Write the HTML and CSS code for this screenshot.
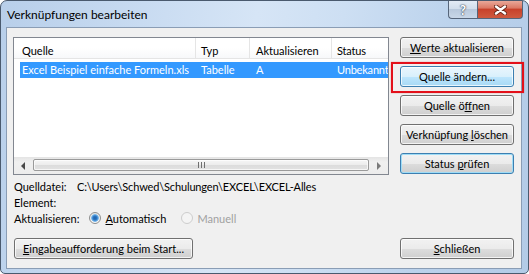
FILE: index.html
```html
<!DOCTYPE html>
<html lang="de">
<head>
  <meta charset="UTF-8" />
  <title>Verknüpfungen bearbeiten</title>
  <link rel="stylesheet" href="styles.css">
</head>
<body>
  <div class="fenster">
    <div class="titelleiste">
      <span class="titel">Verknüpfungen bearbeiten</span>
      <div class="titel-knoepfe">
        <span class="knopf-hilfe">?</span>
        <span class="knopf-schliessen">
          <svg width="13" height="10" viewBox="0 0 13 10">
            <path d="M2 1.5 L11 8.5 M11 1.5 L2 8.5" stroke="#6b2a1c" stroke-width="4.2" stroke-linecap="round" fill="none"/>
            <path d="M2 1.5 L11 8.5 M11 1.5 L2 8.5" stroke="#fff" stroke-width="2.4" stroke-linecap="round" fill="none"/>
          </svg>
        </span>
      </div>
    </div>

    <div class="inhalt">
      <div class="oben">
        <div class="links">
          <div class="liste">
            <div class="kopf">
              <span class="sp sp-quelle">Quelle</span>
              <span class="sp sp-typ">Typ</span>
              <span class="sp sp-akt">Aktualisieren</span>
              <span class="sp sp-status">Status</span>
            </div>
            <div class="zeilen">
              <div class="zeile aktiv">
                <span class="sp sp-quelle">Excel Beispiel einfache Formeln.xls</span>
                <span class="sp sp-typ">Tabelle</span>
                <span class="sp sp-akt">A</span>
                <span class="sp sp-status">Unbekannt</span>
              </div>
            </div>
            <div class="scrollleiste">
              <span class="pfeil"><span class="dreieck-links"></span></span>
              <span class="daumen">
                <svg width="7" height="6" viewBox="0 0 7 6">
                  <path d="M0.5 0 V6 M3.5 0 V6 M6.5 0 V6" stroke="#6f6f6f" stroke-width="1"/>
                </svg>
              </span>
              <span class="pfeil"><span class="dreieck-rechts"></span></span>
            </div>
          </div>

          <div class="info">
            <div class="info-zeile">
              <span class="info-label">Quelldatei:</span>
              <span class="pfad">C:\Users\Schwed\Schulungen\EXCEL\EXCEL-Alles</span>
            </div>
            <div class="info-zeile">
              <span class="info-label">Element:</span>
            </div>
            <div class="info-zeile">
              <span>Aktualisieren:</span>
              <label class="radio"><span class="kreis an"></span><span><u>A</u>utomatisch</span></label>
              <label class="radio aus"><span class="kreis"></span><span>Manuell</span></label>
            </div>
          </div>
        </div>

        <div class="knoepfe">
          <button class="knopf"><u>W</u>erte aktualisieren</button>
          <button class="knopf hover">Quelle ändern...</button>
          <button class="knopf">Quelle ö<u>f</u>fnen</button>
          <button class="knopf">Verknüpfung <u>l</u>öschen</button>
          <button class="knopf standard">Status <u>p</u>rüfen</button>
        </div>
      </div>

      <div class="unten">
        <button class="knopf breit"><u>E</u>ingabeaufforderung beim Start...</button>
        <button class="knopf"><u>S</u>chließen</button>
      </div>
    </div>

    <div class="markierung"></div>
  </div>
</body>
</html>
```

FILE: styles.css
```css
* {
  box-sizing: border-box;
}

body {
  margin: 0;
  background: #fff;
  font-family: Lato, "Liberation Sans", sans-serif;
  font-size: 11px;
  color: #000;
}

.fenster {
  position: relative;
  width: 529px;
  height: 274px;
  border: 1px solid #4a5a6e;
  border-radius: 7px 7px 5px 5px;
  background: linear-gradient(100deg, #b8cfea 0%, #c8dbf1 25%, #d6e5f6 45%, #cddff3 60%, #bbd2ec 80%, #b3cbe7 100%);
  display: flex;
  flex-direction: column;
}

/* TITELLEISTE */
.titelleiste {
  height: 26px;
  display: flex;
  justify-content: space-between;
  padding: 0 5px 0 6px;
}

.titel {
  padding-top: 7px;
  line-height: 14px;
  font-size: 12px;
}

.titel-knoepfe {
  display: flex;
  height: 18px;
}

.knopf-hilfe,
.knopf-schliessen {
  display: flex;
  align-items: center;
  justify-content: center;
  border: 1px solid #56657a;
  border-top: none;
}

.knopf-hilfe {
  width: 29px;
  border-right: none;
  border-radius: 0 0 0 4px;
  background: linear-gradient(#e3ebf5 0%, #d2deec 45%, #b9c9dc 50%, #c9d7e8 100%);
  color: #fff;
  font-weight: bold;
  font-size: 13px;
  text-shadow: 0 0 1px #4d5b6e, 0 0 1px #4d5b6e, 0 0 2px #4d5b6e;
}

.knopf-schliessen {
  width: 46px;
  border-radius: 0 0 4px 0;
  background: linear-gradient(#e9a899 0%, #dc7a66 40%, #c8422b 50%, #cf5a3f 100%);
}

/* INHALT */
.inhalt {
  flex: 1;
  margin: 0 6px 4px 5px;
  border: 1px solid #8a9db5;
  background: #f0f0f0;
  padding: 9px 7px 9px 6px;
  display: flex;
  flex-direction: column;
}

.oben {
  display: flex;
  gap: 11px;
}

.links {
  width: 376px;
}

.liste {
  height: 138px;
  border: 1px solid #828790;
  background: #fff;
  display: flex;
  flex-direction: column;
  overflow: hidden;
}

.kopf {
  height: 21px;
  display: flex;
  border-bottom: 1px solid #e5e5e5;
  background: linear-gradient(#fff 0%, #fff 50%, #f7f8fa 100%);
  padding-top: 4px;
}

.kopf .sp {
  border-right: 1px solid #e5e5e5;
  display: flex;
  align-items: center;
  margin-top: -4px;
  padding-top: 4px;
}

.sp {
  white-space: nowrap;
  overflow: hidden;
  flex-shrink: 0;
}

.sp-quelle {
  width: 182px;
  padding-left: 8px;
}

.sp-typ {
  width: 54px;
  padding-left: 5px;
}

.sp-akt {
  width: 82px;
  padding-left: 6px;
}

.sp-status {
  width: 80px;
  padding-left: 5px;
  letter-spacing: -0.2px;
}

.zeilen {
  flex: 1;
  padding-top: 3px;
}

.zeile {
  display: flex;
  height: 16px;
  line-height: 16px;
  margin-left: 6px;
}

.zeile .sp-quelle {
  width: 176px;
  padding-left: 2px;
}

.zeile.aktiv {
  background: #3399ff;
  color: #fff;
}

/* SCROLLLEISTE */
.scrollleiste {
  height: 17px;
  display: flex;
  background: linear-gradient(#e4e4e4 0%, #f0f0f0 30%, #ececec 100%);
}

.pfeil {
  width: 18px;
  display: flex;
  align-items: center;
  justify-content: center;
}

.dreieck-links {
  border-right: 4px solid #4a4a4a;
  border-top: 4px solid transparent;
  border-bottom: 4px solid transparent;
}

.dreieck-rechts {
  border-left: 4px solid #7a7a7a;
  border-top: 4px solid transparent;
  border-bottom: 4px solid transparent;
}

.daumen {
  flex: 1;
  margin: 2px 1px 3px;
  border: 1px solid #9a9a9a;
  border-radius: 2px;
  background: linear-gradient(#f6f6f6 0%, #ececec 50%, #dcdcdc 51%, #e2e2e2 100%);
  box-shadow: inset 0 0 0 1px rgba(255, 255, 255, 0.7);
  display: flex;
  align-items: center;
  justify-content: center;
}

/* INFO */
.info {
  margin-top: 3px;
}

.info-zeile {
  display: flex;
  align-items: center;
  height: 16px;
  padding-left: 1px;
}

.info-label {
  width: 63px;
}

.pfad {
  letter-spacing: -0.15px;
}

.radio {
  display: flex;
  align-items: center;
  gap: 4px;
  margin-left: 10px;
}

.radio.aus {
  color: #a0a0a0;
  margin-left: 15px;
}

.kreis {
  width: 12px;
  height: 12px;
  border-radius: 50%;
  border: 1px solid #8e8f8f;
  background: linear-gradient(#e2e2e2, #fafafa);
}

.kreis.an {
  background: radial-gradient(circle, #1f5fa8 0, #2b77c4 2px, #7ab8ea 3.5px, transparent 4.2px), linear-gradient(#e2e2e2, #fafafa);
}

.radio.aus .kreis {
  border-color: #cdcdcd;
  background: #f4f4f4;
}

/* KNOEPFE */
.knoepfe {
  width: 114px;
  display: flex;
  flex-direction: column;
  gap: 8px;
}

.knopf {
  height: 21px;
  padding: 0;
  border: 1px solid #707070;
  border-radius: 3px;
  background: linear-gradient(#f2f2f2 0%, #ebebeb 50%, #dddddd 51%, #cfcfcf 100%);
  box-shadow: inset 0 0 0 1px rgba(255, 255, 255, 0.75);
  font-family: Lato, "Liberation Sans", sans-serif;
  font-size: 11px;
  color: #000;
  width: 114px;
}

.knopf.hover {
  border-color: #3c7fb1;
  background: linear-gradient(#eaf6fd 0%, #d9f0fc 50%, #bee6fd 51%, #a7d9f5 100%);
}

.knopf.standard {
  border-color: #3c7fb1;
  box-shadow: inset 0 0 0 1px #9fdcf6;
}

.knopf.breit {
  width: 179px;
}

.unten {
  margin-top: auto;
  display: flex;
  justify-content: space-between;
  padding-left: 1px;
}

/* ROTE MARKIERUNG */
.markierung {
  position: absolute;
  left: 390px;
  top: 61px;
  width: 133px;
  height: 31px;
  border: 2px solid #e3101a;
  box-shadow: 0 0 1px rgba(200, 0, 0, 0.5);
}
```
